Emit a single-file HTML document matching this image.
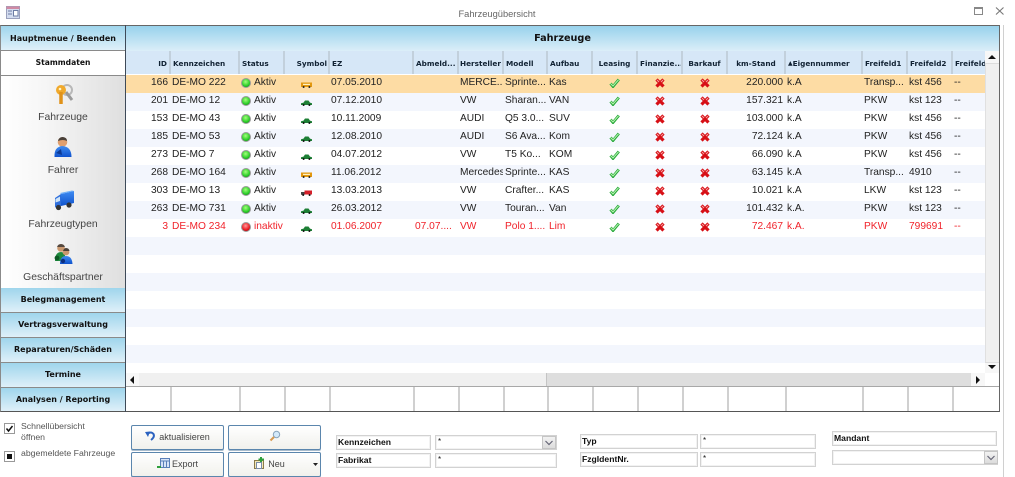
<!DOCTYPE html>
<html lang="de"><head><meta charset="utf-8"><title>Fahrzeugübersicht</title>
<style>
html,body{margin:0;padding:0;background:#fff}
body{position:relative;width:1015px;height:477px;overflow:hidden;font:11px "Liberation Sans",sans-serif;color:#222}
.a{position:absolute;box-sizing:border-box;white-space:nowrap}
.nav{left:1px;width:124px;background:linear-gradient(#9fd5ec,#dff0f9);border-bottom:1px solid #8a8a8a;text-align:center;font:bold 8px/24px "DejaVu Sans",sans-serif;color:#111}
.lab{left:1px;width:124px;text-align:center;color:#444;font-size:10.4px}
.h{top:51px;height:23px;background:#d6e7f7;border-right:2px solid #c2d0dc;font:bold 7.3px/25px "DejaVu Sans",sans-serif;color:#123;padding:0 2px;overflow:hidden}
table{position:absolute;left:126px;top:75px;width:859px;border-collapse:collapse;table-layout:fixed;font-size:10.2px;color:#222}
td{height:18px;padding:0 2px;overflow:hidden;white-space:nowrap;box-sizing:border-box;line-height:16px;vertical-align:top}
tr:nth-child(even){background:#f3f6fd}
tr.s{background:#fddca4}
tr.r{color:#f0222a}
.ri{text-align:right}.c{text-align:center}
td svg{display:inline-block;vertical-align:top}
.st{padding-left:2px}.st svg{margin:3px 3px 0 0}
.ic svg{margin-top:3px}
td:nth-child(4) svg{margin-top:7px}
.fb{top:387px;height:24px;width:2px;background:#d0d0d0}
.btn{height:25px;background:linear-gradient(#fff,#f1f1ec);border:1px solid #5b86ad;border-radius:2px;box-shadow:0 1px 0 #a9bccd;text-align:center;color:#444;font-size:9px;line-height:23px}
.fld{border:1px solid #d2d2d2;box-shadow:inset 0 0 0 1px #f2f2f2;background:#fff;height:15px;font:bold 8.6px/12px "Liberation Sans",sans-serif;color:#111;padding-left:1px}
.inp{font:8px/11px "Liberation Sans",sans-serif;padding-left:2px}
.drop{border:1px solid #c5c5c5;background:linear-gradient(#f2f2f2,#dcdcdc);width:14px;height:13px;text-align:center}
</style></head><body>
<svg width="0" height="0" style="position:absolute"><defs>
<radialGradient id="g1" cx=".45" cy=".35" r=".7"><stop offset="0" stop-color="#a4ff7c"/><stop offset=".7" stop-color="#2fd02b"/><stop offset="1" stop-color="#139a18"/></radialGradient>
<radialGradient id="g2" cx=".45" cy=".35" r=".7"><stop offset="0" stop-color="#ff9a9a"/><stop offset=".7" stop-color="#ee1c24"/><stop offset="1" stop-color="#a8080f"/></radialGradient>
<symbol id="ok" viewBox="0 0 10 10"><circle cx="5" cy="5" r="5" fill="#9a9a9a"/><circle cx="5" cy="5" r="4" fill="url(#g1)"/></symbol>
<symbol id="no" viewBox="0 0 10 10"><circle cx="5" cy="5" r="5" fill="#9a9a9a"/><circle cx="5" cy="5" r="4" fill="url(#g2)"/></symbol>
<symbol id="chk" viewBox="0 0 11 10"><path d="M1.5 5.500 4 8.500 9.800 1.500" fill="none" stroke="#27a83a" stroke-width="2.800"/><path d="M1.500 5.500 4 8 9.500 1.800" fill="none" stroke="#b8f5b0" stroke-width="1"/></symbol>
<symbol id="x" viewBox="0 0 10 10"><path d="M1.500 1.500 8.500 8.500M8.500 1.500 1.500 8.500" stroke="#d70f16" stroke-width="3.200"/><path d="M2 2 4 4M8 2 6 4" stroke="#f7a0a0" stroke-width="1"/></symbol>
<symbol id="car" viewBox="0 0 11 6"><path d="M0 5V3.200L2.500 2.600 4 .5H7.500L9 2.600 11 3.200V5Z" fill="#1d7f35"/><circle cx="2.600" cy="5" r="1" fill="#111"/><circle cx="8.400" cy="5" r="1" fill="#111"/></symbol>
<symbol id="van" viewBox="0 0 11 6"><path d="M0 .5H11V5H0Z" fill="#e3980f"/><path d="M2 1.800H9V3H2Z" fill="#fff1c0"/><circle cx="2.600" cy="5" r="1" fill="#222"/><circle cx="8.400" cy="5" r="1" fill="#222"/></symbol>
<symbol id="trk" viewBox="0 0 11 6"><path d="M3.500 .5H11V4.500H3.500Z" fill="#d5202a"/><path d="M0 2H3.500V4.800H0Z" fill="#444"/><circle cx="2.200" cy="5" r="1" fill="#111"/><circle cx="8.600" cy="5" r="1" fill="#111"/></symbol>
<linearGradient id="bl" x1="0" y1="0" x2="0" y2="1"><stop offset="0" stop-color="#3f8cf2"/><stop offset="1" stop-color="#0f52cc"/></linearGradient>
</defs></svg>

<!-- Title bar -->
<svg class="a" style="left:6px;top:6px" width="14" height="13"><rect x=".5" y=".5" width="13" height="12" fill="#d3dcef" stroke="#9aa0bc"/><rect x=".5" y=".5" width="13" height="2.500" fill="#d08aa4"/><path d="M2 5H6M2 8H6" stroke="#6c7ca4"/><rect x="7.500" y="4.500" width="4.500" height="5.500" fill="#fff" stroke="#6c7ca4"/></svg>
<div class="a" style="left:397px;top:8px;width:200px;text-align:center;color:#666;font-size:9.300px;line-height:13px">Fahrzeugübersicht</div>
<svg class="a" style="left:973px;top:6px" width="32" height="10"><path d="M1.500 1.500H9.500V8.500H1.500ZM1.500 2.500H9.500" fill="none" stroke="#888"/><path d="M23 1.500 30.500 8.500M30.500 1.500 23 8.500" stroke="#777" stroke-width="1.100"/></svg>

<!-- Frame -->
<div class="a" style="left:1003px;top:25px;width:1px;height:452px;background:#d0d0d0"></div>
<div class="a" style="left:0;top:25px;width:1000px;height:387px;border:1px solid #8a8a8a;border-top:1px solid #666;border-bottom:1px solid #555;border-right:1px solid #666"></div>
<div class="a" style="left:125px;top:25px;width:1px;height:387px;background:#3e4a58"></div>
<div class="a" style="left:126px;top:26px;width:873px;height:25px;background:linear-gradient(#98d2ec,#dbeef8);font:bold 9.700px/25px 'DejaVu Sans',sans-serif;color:#111;text-align:center">Fahrzeuge</div>

<!-- Sidebar -->
<div class="a nav" style="top:26px;height:25px;line-height:25px">Hauptmenue / Beenden</div>
<div class="a nav" style="top:51px;height:25px;background:#fff;line-height:24px;font-size:7.600px">Stammdaten</div>
<div class="a" style="left:1px;top:76px;width:124px;height:212px;background:linear-gradient(90deg,#fff,#f6f6f6 35%,#dfdfdf)"></div>
<svg class="a" style="left:54px;top:83px" width="20" height="22"><circle cx="13" cy="7" r="5" fill="none" stroke="#b8b8b8" stroke-width="2"/><path d="M12 9 18 17" stroke="#9a9a9a" stroke-width="3"/><circle cx="7" cy="7" r="5" fill="#f0a92c"/><path d="M7 9V21" stroke="#e0921a" stroke-width="3.500"/><circle cx="6" cy="6" r="1.300" fill="#fff4c8"/></svg>
<div class="a lab" style="top:111px;line-height:14px">Fahrzeuge</div>
<svg class="a" style="left:54px;top:136px" width="18" height="22"><circle cx="8.500" cy="6" r="4.800" fill="#e0a070"/><path d="M4 5Q5 .8 9 1 13 1.500 13 5 9 3 4 5Z" fill="#4a4038"/><path d="M.5 21Q0 11 8 10 17.500 10.500 17.500 21Z" fill="url(#bl)"/><path d="M2 17 7 13 8 19Z" fill="#0d3a94"/></svg>
<div class="a lab" style="top:164px;line-height:14px">Fahrer</div>
<svg class="a" style="left:54px;top:190px" width="21" height="21"><path d="M7 4 20 1V13L7 16Z" fill="url(#bl)"/><path d="M7 4 20 1 18 .5 6 3Z" fill="#6fb0f8"/><path d="M1 8 7 4V16L1 17.500Z" fill="#2f6fdc"/><path d="M1.500 9 6 6.500V11L1.500 12.500Z" fill="#cfe4f8"/><circle cx="4.500" cy="17.500" r="2.600" fill="#333"/><circle cx="15" cy="15" r="2.600" fill="#333"/></svg>
<div class="a lab" style="top:218px;line-height:14px">Fahrzeugtypen</div>
<svg class="a" style="left:53px;top:243px" width="20" height="23"><circle cx="8" cy="5" r="3.800" fill="#c9986f"/><path d="M4 4Q5 1 8 1 11 1 12 4Z" fill="#55483e"/><path d="M2 18Q2 9 8 9 11 9 12 12V18Z" fill="#1e8a3e"/><circle cx="4" cy="15" r="2.400" fill="#0c5a25"/><circle cx="13" cy="9" r="3.400" fill="#c9986f"/><path d="M10 8Q11 5 13 5 16 5 16.500 8Z" fill="#4a4038"/><path d="M7 21Q7 13 13 13 19 13 19.500 21Z" fill="url(#bl)"/><circle cx="10" cy="18" r="2.200" fill="#0d2f80"/></svg>
<div class="a lab" style="top:271px;line-height:14px">Geschäftspartner</div>
<div class="a nav" style="top:288px;height:25px">Belegmanagement</div>
<div class="a nav" style="top:313px;height:25px">Vertragsverwaltung</div>
<div class="a nav" style="top:338px;height:25px">Reparaturen/Schäden</div>
<div class="a nav" style="top:363px;height:25px">Termine</div>
<div class="a nav" style="top:388px;height:23px;border-bottom:0">Analysen / Reporting</div>

<!-- Column headers -->
<div class="a h" style="left:126px;width:45px;text-align:right">ID</div>
<div class="a h" style="left:171px;width:69px">Kennzeichen</div>
<div class="a h" style="left:240px;width:45px">Status</div>
<div class="a h" style="left:285px;width:45px;text-align:right;padding-right:1px">Symbol</div>
<div class="a h" style="left:330px;width:84px">EZ</div>
<div class="a h" style="left:414px;width:45px">Abmeld...</div>
<div class="a h" style="left:459px;width:45px;padding:0 1px">Hersteller</div>
<div class="a h" style="left:504px;width:44px">Modell</div>
<div class="a h" style="left:548px;width:45px">Aufbau</div>
<div class="a h" style="left:593px;width:45px;text-align:center">Leasing</div>
<div class="a h" style="left:638px;width:45px;padding:0 1px 0 2px">Finanzie...</div>
<div class="a h" style="left:683px;width:45px;text-align:center">Barkauf</div>
<div class="a h" style="left:728px;width:58px;text-align:center">km-Stand</div>
<div class="a h" style="left:786px;width:77px"><span style="font-size:6px;vertical-align:1px">▲</span>Eigennummer</div>
<div class="a h" style="left:863px;width:45px">Freifeld1</div>
<div class="a h" style="left:908px;width:45px">Freifeld2</div>
<div class="a h" style="left:953px;width:32px;border-right:0">Freifeld</div>

<!-- Data -->
<table><colgroup><col style="width:44px"><col style="width:69px"><col style="width:45px"><col style="width:45px"><col style="width:84px"><col style="width:45px"><col style="width:45px"><col style="width:44px"><col style="width:45px"><col style="width:45px"><col style="width:45px"><col style="width:45px"><col style="width:58px"><col style="width:77px"><col style="width:45px"><col style="width:45px"><col style="width:33px"></colgroup>
<tr class="s"><td class="ri">166</td><td>DE-MO 222</td><td class="st"><svg width="10" height="10"><use href="#ok"/></svg>Aktiv</td><td class="c ic"><svg width="11" height="6"><use href="#van"/></svg></td><td>07.05.2010</td><td></td><td>MERCE...</td><td>Sprinte...</td><td>Kas</td><td class="c ic"><svg width="11" height="10"><use href="#chk"/></svg></td><td class="c ic"><svg width="10" height="10"><use href="#x"/></svg></td><td class="c ic"><svg width="10" height="10"><use href="#x"/></svg></td><td class="ri">220.000</td><td>k.A</td><td>Transp...</td><td>kst 456</td><td>--</td></tr>
<tr><td class="ri">201</td><td>DE-MO 12</td><td class="st"><svg width="10" height="10"><use href="#ok"/></svg>Aktiv</td><td class="c ic"><svg width="11" height="6"><use href="#car"/></svg></td><td>07.12.2010</td><td></td><td>VW</td><td>Sharan...</td><td>VAN</td><td class="c ic"><svg width="11" height="10"><use href="#chk"/></svg></td><td class="c ic"><svg width="10" height="10"><use href="#x"/></svg></td><td class="c ic"><svg width="10" height="10"><use href="#x"/></svg></td><td class="ri">157.321</td><td>k.A</td><td>PKW</td><td>kst 123</td><td>--</td></tr>
<tr><td class="ri">153</td><td>DE-MO 43</td><td class="st"><svg width="10" height="10"><use href="#ok"/></svg>Aktiv</td><td class="c ic"><svg width="11" height="6"><use href="#car"/></svg></td><td>10.11.2009</td><td></td><td>AUDI</td><td>Q5 3.0...</td><td>SUV</td><td class="c ic"><svg width="11" height="10"><use href="#chk"/></svg></td><td class="c ic"><svg width="10" height="10"><use href="#x"/></svg></td><td class="c ic"><svg width="10" height="10"><use href="#x"/></svg></td><td class="ri">103.000</td><td>k.A</td><td>PKW</td><td>kst 456</td><td>--</td></tr>
<tr><td class="ri">185</td><td>DE-MO 53</td><td class="st"><svg width="10" height="10"><use href="#ok"/></svg>Aktiv</td><td class="c ic"><svg width="11" height="6"><use href="#car"/></svg></td><td>12.08.2010</td><td></td><td>AUDI</td><td>S6 Ava...</td><td>Kom</td><td class="c ic"><svg width="11" height="10"><use href="#chk"/></svg></td><td class="c ic"><svg width="10" height="10"><use href="#x"/></svg></td><td class="c ic"><svg width="10" height="10"><use href="#x"/></svg></td><td class="ri">72.124</td><td>k.A</td><td>PKW</td><td>kst 456</td><td>--</td></tr>
<tr><td class="ri">273</td><td>DE-MO 7</td><td class="st"><svg width="10" height="10"><use href="#ok"/></svg>Aktiv</td><td class="c ic"><svg width="11" height="6"><use href="#car"/></svg></td><td>04.07.2012</td><td></td><td>VW</td><td>T5 Ko...</td><td>KOM</td><td class="c ic"><svg width="11" height="10"><use href="#chk"/></svg></td><td class="c ic"><svg width="10" height="10"><use href="#x"/></svg></td><td class="c ic"><svg width="10" height="10"><use href="#x"/></svg></td><td class="ri">66.090</td><td>k.A</td><td>PKW</td><td>kst 456</td><td>--</td></tr>
<tr><td class="ri">268</td><td>DE-MO 164</td><td class="st"><svg width="10" height="10"><use href="#ok"/></svg>Aktiv</td><td class="c ic"><svg width="11" height="6"><use href="#van"/></svg></td><td>11.06.2012</td><td></td><td>Mercedes</td><td>Sprinte...</td><td>KAS</td><td class="c ic"><svg width="11" height="10"><use href="#chk"/></svg></td><td class="c ic"><svg width="10" height="10"><use href="#x"/></svg></td><td class="c ic"><svg width="10" height="10"><use href="#x"/></svg></td><td class="ri">63.145</td><td>k.A</td><td>Transp...</td><td>4910</td><td>--</td></tr>
<tr><td class="ri">303</td><td>DE-MO 13</td><td class="st"><svg width="10" height="10"><use href="#ok"/></svg>Aktiv</td><td class="c ic"><svg width="11" height="6"><use href="#trk"/></svg></td><td>13.03.2013</td><td></td><td>VW</td><td>Crafter...</td><td>KAS</td><td class="c ic"><svg width="11" height="10"><use href="#chk"/></svg></td><td class="c ic"><svg width="10" height="10"><use href="#x"/></svg></td><td class="c ic"><svg width="10" height="10"><use href="#x"/></svg></td><td class="ri">10.021</td><td>k.A</td><td>LKW</td><td>kst 123</td><td>--</td></tr>
<tr><td class="ri">263</td><td>DE-MO 731</td><td class="st"><svg width="10" height="10"><use href="#ok"/></svg>Aktiv</td><td class="c ic"><svg width="11" height="6"><use href="#car"/></svg></td><td>26.03.2012</td><td></td><td>VW</td><td>Touran...</td><td>Van</td><td class="c ic"><svg width="11" height="10"><use href="#chk"/></svg></td><td class="c ic"><svg width="10" height="10"><use href="#x"/></svg></td><td class="c ic"><svg width="10" height="10"><use href="#x"/></svg></td><td class="ri">101.432</td><td>k.A.</td><td>PKW</td><td>kst 123</td><td>--</td></tr>
<tr class="r"><td class="ri">3</td><td>DE-MO 234</td><td class="st"><svg width="10" height="10"><use href="#no"/></svg>inaktiv</td><td class="c ic"><svg width="11" height="6"><use href="#car"/></svg></td><td>01.06.2007</td><td>07.07....</td><td>VW</td><td>Polo 1....</td><td>Lim</td><td class="c ic"><svg width="11" height="10"><use href="#chk"/></svg></td><td class="c ic"><svg width="10" height="10"><use href="#x"/></svg></td><td class="c ic"><svg width="10" height="10"><use href="#x"/></svg></td><td class="ri">72.467</td><td>k.A.</td><td>PKW</td><td>799691</td><td>--</td></tr>
<tr><td colspan="17"></td></tr><tr><td colspan="17"></td></tr><tr><td colspan="17"></td></tr><tr><td colspan="17"></td></tr><tr><td colspan="17"></td></tr><tr><td colspan="17"></td></tr>
</table>
<div class="a" style="left:126px;top:345px;width:859px;height:18px;background:#f3f6fd"></div>

<!-- Vertical scrollbar -->
<div class="a" style="left:985px;top:51px;width:14px;height:322px;background:#f0f0f0;border-left:1px solid #e0e0e0"></div>
<div class="a" style="left:985px;top:51px;width:14px;height:13px;background:#f7f7f7;border-bottom:1px solid #ddd"></div>
<div class="a" style="left:985px;top:362px;width:14px;height:11px;background:#f7f7f7;border-top:1px solid #ddd"></div>
<svg class="a" style="left:988px;top:55px" width="8" height="5"><path d="M0 4 4 0 8 4Z" fill="#111"/></svg>
<svg class="a" style="left:988px;top:365px" width="8" height="5"><path d="M0 0 8 0 4 4Z" fill="#111"/></svg>

<!-- Horizontal scrollbar -->
<div class="a" style="left:126px;top:373px;width:420px;height:13px;background:#f0f0f0"></div>
<div class="a" style="left:546px;top:373px;width:425px;height:13px;background:#dedede;border-left:1px solid #c4c4c4"></div>
<div class="a" style="left:126px;top:373px;width:13px;height:13px;background:#f7f7f7"></div>
<div class="a" style="left:971px;top:373px;width:14px;height:13px;background:#f7f7f7"></div>
<svg class="a" style="left:130px;top:376px" width="5" height="8"><path d="M4 0V8L0 4Z" fill="#111"/></svg>
<svg class="a" style="left:976px;top:376px" width="5" height="8"><path d="M0 0V8L4 4Z" fill="#111"/></svg>
<div class="a" style="left:126px;top:386px;width:873px;height:1px;background:#a8a8a8"></div>

<!-- Footer cell dividers -->
<div class="a fb" style="left:170px"></div><div class="a fb" style="left:239px"></div><div class="a fb" style="left:284px"></div><div class="a fb" style="left:329px"></div><div class="a fb" style="left:413px"></div><div class="a fb" style="left:458px"></div><div class="a fb" style="left:503px"></div><div class="a fb" style="left:547px"></div><div class="a fb" style="left:592px"></div><div class="a fb" style="left:637px"></div><div class="a fb" style="left:682px"></div><div class="a fb" style="left:727px"></div><div class="a fb" style="left:785px"></div><div class="a fb" style="left:862px"></div><div class="a fb" style="left:907px"></div><div class="a fb" style="left:952px"></div>

<!-- Checkboxes -->
<svg class="a" style="left:4px;top:423px" width="11" height="11"><rect x=".5" y=".5" width="10" height="10" fill="#fff" stroke="#999"/><path d="M2.500 5.500 4.500 8 8.500 3" fill="none" stroke="#111" stroke-width="1.500"/></svg>
<div class="a" style="left:21px;top:421px;color:#555;font-size:8.700px;line-height:11px">Schnellübersicht<br>öffnen</div>
<svg class="a" style="left:4px;top:451px" width="11" height="11"><rect x=".5" y=".5" width="10" height="10" fill="#fff" stroke="#999"/><rect x="3" y="3" width="5" height="5" fill="#111"/></svg>
<div class="a" style="left:21px;top:448px;color:#555;font-size:8.700px;line-height:11px">abgemeldete Fahrzeuge</div>

<!-- Buttons -->
<div class="a btn" style="left:131px;top:425px;width:93px"><svg width="10" height="10" style="vertical-align:-1px;margin-right:4px"><path d="M2 3Q6 0 8.500 3 10 6 6 9" fill="none" stroke="#2b62c0" stroke-width="2"/><path d="M0 1 5 .5 3 6Z" fill="#2b62c0"/></svg>aktualisieren</div>
<div class="a btn" style="left:228px;top:425px;width:93px"><svg width="12" height="12" style="vertical-align:-2px"><circle cx="7.500" cy="4.500" r="3.200" fill="#d3e9fa" stroke="#8aa5bd"/><path d="M5 7 1.500 10.500" stroke="#d89a50" stroke-width="2"/></svg></div>
<div class="a btn" style="left:131px;top:452px;width:93px"><svg width="13" height="11" style="vertical-align:-2px;margin-right:2px"><rect x="3.500" y=".5" width="9" height="9" fill="#d7e4f8" stroke="#5a7fb8"/><path d="M3.500 3H12.500M6.500 3V9.500M9.500 3V9.500" stroke="#5a7fb8"/><path d="M0 9H4" stroke="#2f9f3c" stroke-width="2"/></svg>Export</div>
<div class="a btn" style="left:228px;top:452px;width:93px;padding-right:11px"><svg width="13" height="12" style="vertical-align:-2px;margin-right:2px"><rect x="1.500" y="3.500" width="9" height="8" fill="#f3e8b8" stroke="#8a7a4a"/><rect x="3.500" y="5.500" width="5" height="6" fill="#fff" stroke="#7a8ca8"/><path d="M8 0V5M5.500 2.500H11" stroke="#2f9f3c" stroke-width="2"/></svg>Neu</div>
<svg class="a" style="left:313px;top:463px" width="5" height="3"><path d="M0 0H5L2.500 3Z" fill="#222"/></svg>

<!-- Filters -->
<div class="a fld" style="left:336px;top:435px;width:95px">Kennzeichen</div>
<div class="a fld inp" style="left:435px;top:435px;width:122px">*</div>
<div class="a drop" style="left:542px;top:436px"><svg width="8" height="6" style="display:block;margin:3px auto"><path d="M.5 1 4 4.500 7.500 1" fill="none" stroke="#667" stroke-width="1.200"/></svg></div>
<div class="a fld" style="left:336px;top:453px;width:95px">Fabrikat</div>
<div class="a fld inp" style="left:435px;top:453px;width:122px">*</div>
<div class="a fld" style="left:580px;top:434px;width:118px">Typ</div>
<div class="a fld inp" style="left:700px;top:434px;width:116px">*</div>
<div class="a fld" style="left:580px;top:452px;width:118px">FzgIdentNr.</div>
<div class="a fld inp" style="left:700px;top:452px;width:116px">*</div>
<div class="a fld" style="left:832px;top:431px;width:165px">Mandant</div>
<div class="a fld inp" style="left:832px;top:450px;width:166px"></div>
<div class="a drop" style="left:984px;top:451px"><svg width="8" height="6" style="display:block;margin:3px auto"><path d="M.5 1 4 4.500 7.500 1" fill="none" stroke="#667" stroke-width="1.200"/></svg></div>
</body></html>
